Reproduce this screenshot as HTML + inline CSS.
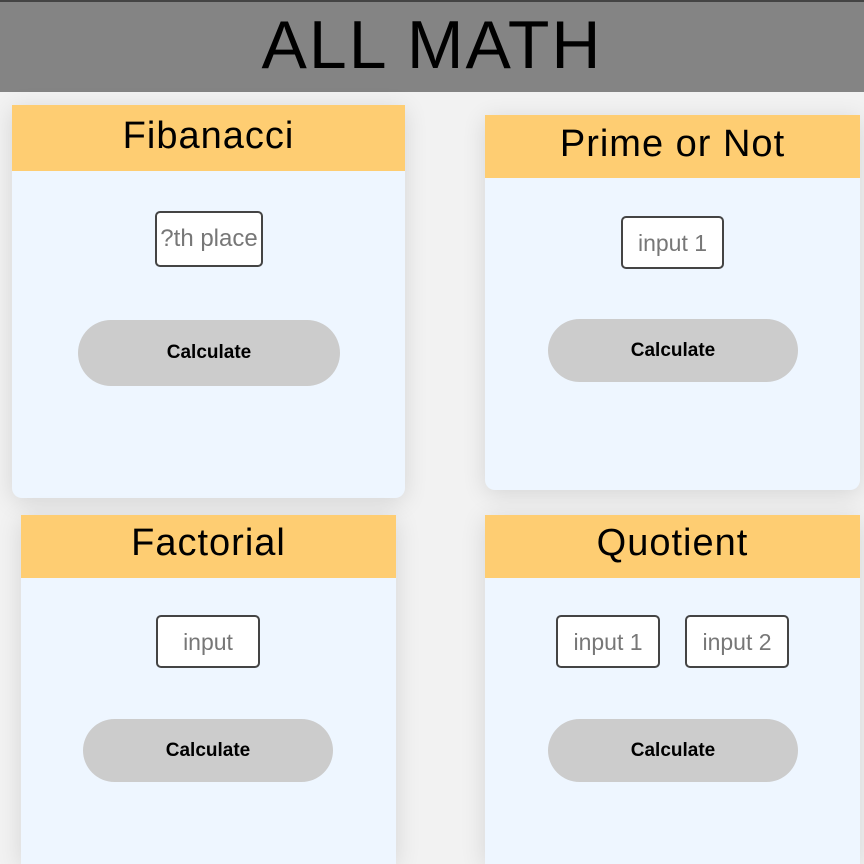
<!DOCTYPE html>
<html style="width:864px;height:864px;overflow:hidden"><head><style>
*{box-sizing:border-box;margin:0;padding:0}
body{width:864px;height:864px;overflow:hidden;background:#f2f2f2;font-family:"Liberation Sans",sans-serif;position:relative}
.hd{position:absolute;left:0;top:0;width:864px;height:92px;background:#848484;border-top:2px solid #444;text-align:center;font-size:68px;line-height:86px;color:#000;letter-spacing:2px}
.card{position:absolute;background:#eef6ff;border-radius:0 0 10px 10px;box-shadow:0 4px 24px rgba(0,0,0,.12)}
.card .t{background:#fecd72;text-align:center;font-size:38px;color:#000;letter-spacing:1px}
.in{position:absolute;background:#fff;border:2px solid #444;border-radius:5px;color:#777;font-size:23px;text-align:center}
.bt{position:absolute;background:#cccccc;border-radius:40px;text-align:center;font-weight:bold;font-size:19px;color:#000}
</style></head><body>
<div class="hd">ALL MATH</div>

<div class="card" style="left:12px;top:105px;width:393px;height:393px">
<div class="t" style="height:66px;line-height:62px">Fibanacci</div>
<div class="in" style="left:143px;top:106px;width:108px;height:56px;line-height:52px;font-size:24px">?th place</div>
<div class="bt" style="left:66px;top:215px;width:262px;height:66px;line-height:66px">Calculate</div>
</div>

<div class="card" style="left:485px;top:115px;width:375px;height:375px">
<div class="t" style="height:63px;line-height:58px">Prime or Not</div>
<div class="in" style="left:136px;top:101px;width:103px;height:53px;line-height:51px">input 1</div>
<div class="bt" style="left:63px;top:204px;width:250px;height:63px;line-height:63px">Calculate</div>
</div>

<div class="card" style="left:21px;top:515px;width:375px;height:349px;border-radius:0">
<div class="t" style="height:63px;line-height:56px">Factorial</div>
<div class="in" style="left:135px;top:100px;width:104px;height:53px;line-height:51px">input</div>
<div class="bt" style="left:62px;top:204px;width:250px;height:63px;line-height:63px">Calculate</div>
</div>

<div class="card" style="left:485px;top:515px;width:375px;height:349px;border-radius:0">
<div class="t" style="height:63px;line-height:56px">Quotient</div>
<div class="in" style="left:71px;top:100px;width:104px;height:53px;line-height:51px">input 1</div>
<div class="in" style="left:200px;top:100px;width:104px;height:53px;line-height:51px">input 2</div>
<div class="bt" style="left:63px;top:204px;width:250px;height:63px;line-height:63px">Calculate</div>
</div>
</body></html>
